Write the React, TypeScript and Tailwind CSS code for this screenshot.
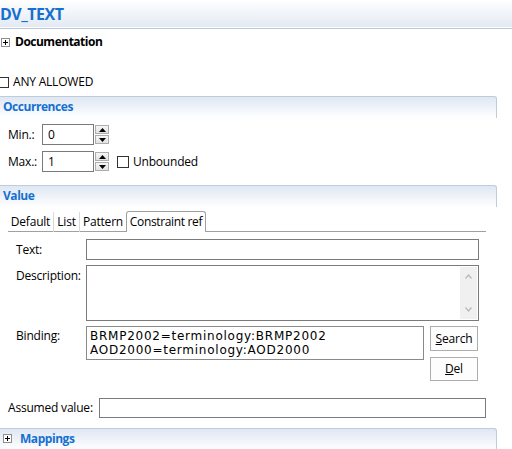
import React from "react";

function PlusBox() {
  return (
    <svg width="9" height="9" viewBox="0 0 9 9" className="shrink-0">
      <rect x="0.5" y="0.5" width="8" height="8" fill="#fff" stroke="#8f8f8f" />
      <path d="M2 4.5h5M4.5 2v5" stroke="#000" strokeWidth="1" />
    </svg>
  );
}

function Spinner() {
  return (
    <div className="w-[16px] h-[21px] flex flex-col justify-center gap-px pl-px">
      <div className="h-[9px] w-[14px] border border-[#adadad] bg-linear-to-b from-[#f6f6f6] to-[#e2e2e2] flex items-center justify-center">
        <svg width="7" height="4" viewBox="0 0 7 4"><path d="M0 4L3.5 0L7 4Z" fill="#000" /></svg>
      </div>
      <div className="h-[9px] w-[14px] border border-[#adadad] bg-linear-to-b from-[#f6f6f6] to-[#e2e2e2] flex items-center justify-center">
        <svg width="7" height="4" viewBox="0 0 7 4"><path d="M0 0L3.5 4L7 0Z" fill="#000" /></svg>
      </div>
    </div>
  );
}

function SectionHeader({ title, plus }: { title: string; plus?: boolean }) {
  return (
    <div className="w-[497px] h-[22px] border-t border-r border-[#bccdde] rounded-tr-[3px] bg-linear-to-b from-[#dfe7f2] to-white flex items-center gap-[8px] pl-[3px] pb-[2px]">
      {plus && <PlusBox />}
      <span className="font-bold text-[#1470d2] leading-none tracking-[-0.45px]">{title}</span>
    </div>
  );
}

export default function App() {
  return (
    <div className="w-[512px] h-[449px] overflow-hidden bg-white text-[12px] text-black font-['Open_Sans','Noto_Sans',sans-serif] tracking-[-0.2px]">
      {/* Title */}
      <div className="h-[27px] bg-linear-to-b from-white to-[#e3e9f3] flex items-center">
        <span className="text-[16px] font-bold text-[#1470d2] leading-none tracking-[-0.5px]">DV_TEXT</span>
      </div>
      <div className="h-px bg-white" />
      <div className="h-px bg-[#b9c9d9]" />

      {/* Documentation */}
      <div className="mt-[5px] h-[16px] flex items-center gap-[5px] pl-px">
        <PlusBox />
        <span className="font-bold leading-none tracking-[-0.5px]">Documentation</span>
      </div>

      {/* Any allowed */}
      <div className="mt-[24px] h-[16px] flex items-center gap-[4px] ml-[-2px]">
        <div className="w-[11px] h-[11px] border border-[#333] bg-white" />
        <span className="leading-none">ANY ALLOWED</span>
      </div>

      {/* Occurrences */}
      <div className="mt-[6px]">
        <SectionHeader title="Occurrences" />
      </div>
      <div className="mt-[6px] pl-[8px] flex items-center h-[21px]">
        <span className="w-[34px]">Min.:</span>
        <div className="w-[52px] h-[21px] border border-[#7a7a7a] flex items-center pl-[5px]">0</div>
        <Spinner />
      </div>
      <div className="mt-[6px] pl-[8px] flex items-center h-[21px]">
        <span className="w-[34px]">Max.:</span>
        <div className="w-[52px] h-[21px] border border-[#7a7a7a] flex items-center pl-[5px]">1</div>
        <Spinner />
        <div className="ml-[7px] w-[12px] h-[12px] border border-[#333]" />
        <span className="ml-[4px]">Unbounded</span>
      </div>

      {/* Value */}
      <div className="mt-[13px]">
        <SectionHeader title="Value" />
      </div>
      <div className="mt-[5px] pl-[8px] w-[486px]">
        <div className="flex items-end h-[20px] border-b border-[#a0a0a0]">
          <div className="w-[46px] h-[20px] flex items-center justify-center border-r border-[#d9d9d9] -mb-px pb-px">Default</div>
          <div className="w-[26px] h-[20px] flex items-center justify-center border-r border-[#d9d9d9] -mb-px pb-px">List</div>
          <div className="w-[46px] h-[20px] flex items-center justify-center -mb-px pb-px">Pattern</div>
          <div className="w-[80px] h-[21px] flex items-center justify-center border border-b-0 border-[#a0a0a0] rounded-t-[3px] bg-white -mb-px tracking-[-0.35px]">Constraint ref</div>
        </div>
      </div>

      <div className="mt-[7px] pl-[16px] flex flex-col">
        <div className="flex items-center h-[21px]">
          <span className="w-[70px]">Text:</span>
          <div className="w-[393px] h-[21px] border border-[#7a7a7a]" />
        </div>
        <div className="mt-[5px] flex items-start">
          <span className="w-[70px] pt-[2px]">Description:</span>
          <div className="w-[393px] h-[56px] border border-[#7a7a7a] flex justify-end p-px">
            <div className="w-[17px] h-full bg-[#f0f0f0] flex flex-col items-center justify-between py-[7px]">
              <svg width="7" height="5" viewBox="0 0 7 5"><path d="M0.5 4.5L3.5 1L6.5 4.5" fill="none" stroke="#b8b8b8" strokeWidth="1.2" /></svg>
              <svg width="7" height="5" viewBox="0 0 7 5"><path d="M0.5 0.5L3.5 4L6.5 0.5" fill="none" stroke="#b8b8b8" strokeWidth="1.2" /></svg>
            </div>
          </div>
        </div>
        <div className="mt-[5px] flex items-start">
          <span className="w-[70px] pt-[1px]">Binding:</span>
          <div className="w-[338px] h-[34px] border border-[#8a8a8a] pl-[3px] pt-[2px] flex flex-col font-['DejaVu_Sans',sans-serif] text-[12px] tracking-[0.75px]">
            <div className="h-[14px] leading-[14px] whitespace-nowrap">BRMP2002=terminology:BRMP2002</div>
            <div className="h-[14px] leading-[14px] whitespace-nowrap">AOD2000=terminology:AOD2000</div>
          </div>
          <div className="ml-[6px] flex flex-col gap-[6px]">
            <button className="w-[48px] h-[25px] border border-[#adadad] bg-[#fdfdfd] flex items-center justify-center">
              <span><span className="underline">S</span>earch</span>
            </button>
            <button className="w-[48px] h-[24px] border border-[#adadad] bg-[#fdfdfd] flex items-center justify-center">
              <span><span className="underline">D</span>el</span>
            </button>
          </div>
        </div>
      </div>

      <div className="mt-[17px] pl-[8px] flex items-center h-[20px]">
        <span className="w-[91px]">Assumed value:</span>
        <div className="w-[387px] h-[20px] border border-[#7a7a7a]" />
      </div>

      <div className="mt-[10px]">
        <SectionHeader title="Mappings" plus />
      </div>
    </div>
  );
}
